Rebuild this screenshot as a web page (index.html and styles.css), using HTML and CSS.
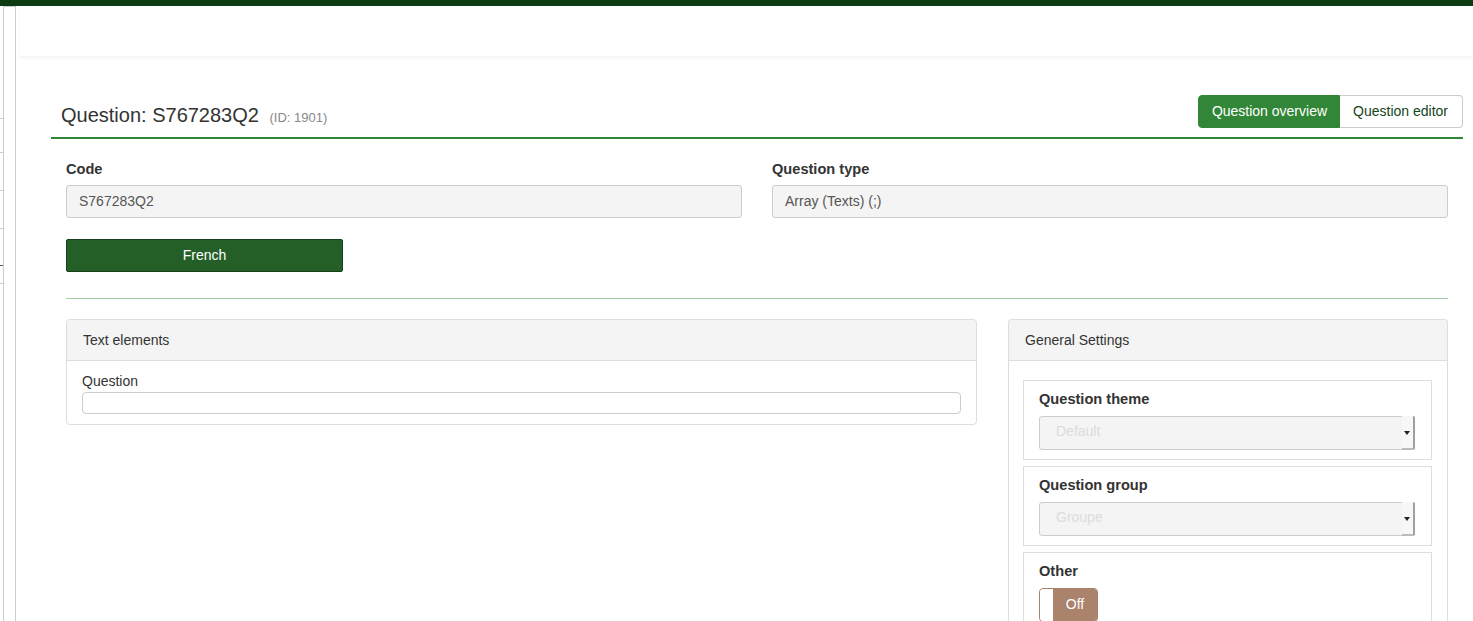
FILE: index.html
```html
<!DOCTYPE html>
<html lang="en">
<head>
<meta charset="utf-8">
<title>Question overview</title>
<link rel="stylesheet" href="styles.css">
</head>
<body>
<div class="topbar"></div>
<div class="layout">
  <aside class="sidebar">
    <div class="stubs">
      <span class="stub s1"></span>
      <span class="stub s2"></span>
      <span class="stub s3"></span>
      <span class="stub s4"></span>
      <span class="stub s5 dark"></span>
      <span class="stub s6"></span>
    </div>
    <div class="rail"></div>
  </aside>
  <main class="main">
    <div class="header"></div>
    <div class="content">
      <div class="title-row">
        <h1 class="title">Question: S767283Q2 <small class="qid">(ID: 1901)</small></h1>
        <div class="btn-group">
          <button class="tab active">Question overview</button>
          <button class="tab">Question editor</button>
        </div>
      </div>
      <div class="form">
        <div class="grid2">
          <div class="field">
            <label class="lbl">Code</label>
            <div class="input ro">S767283Q2</div>
          </div>
          <div class="field">
            <label class="lbl">Question type</label>
            <div class="input ro">Array (Texts) (;)</div>
          </div>
        </div>
        <button class="lang-btn">French</button>
        <hr class="sep">
        <div class="panels">
          <section class="panel text-panel">
            <div class="panel-head">Text elements</div>
            <div class="panel-body">
              <div class="q-label">Question</div>
              <div class="q-input"></div>
            </div>
          </section>
          <section class="panel settings-panel">
            <div class="panel-head">General Settings</div>
            <div class="panel-body settings-body">
              <div class="setting">
                <div class="lbl">Question theme</div>
                <div class="select"><span class="select-text">Default</span><span class="select-arrow"></span></div>
              </div>
              <div class="setting">
                <div class="lbl">Question group</div>
                <div class="select"><span class="select-text">Groupe</span><span class="select-arrow"></span></div>
              </div>
              <div class="setting">
                <div class="lbl">Other</div>
                <div class="toggle"><span class="knob"></span><span class="toggle-off">Off</span></div>
              </div>
            </div>
          </section>
        </div>
      </div>
    </div>
  </main>
</div>
</body>
</html>
```
FILE: styles.css
```css
html, body {
  margin: 0;
  padding: 0;
  height: 100%;
  overflow: hidden;
  background: #fff;
}
body {
  font-family: "Liberation Sans", Arial, sans-serif;
  font-size: 14px;
  color: #333;
}
.topbar {
  height: 6px;
  background: #0d3b13;
}
.layout {
  display: flex;
  min-height: 615px;
}
.sidebar {
  width: 20px;
  flex: none;
  display: flex;
}
.stubs {
  width: 3px;
  position: relative;
}
.stub {
  position: absolute;
  left: 0;
  width: 3px;
  height: 1px;
  background: #ccc;
}
.stub.dark { background: #555; }
.s1 { top: 112px; }
.s2 { top: 146px; }
.s3 { top: 184px; }
.s4 { top: 222px; }
.s5 { top: 259px; }
.s6 { top: 277px; }
.rail {
  width: 11px;
  border: 1px solid #ccc;
  border-bottom: 0;
  background: #fff;
}
.main {
  flex: 1;
  min-width: 0;
}
.header {
  height: 50px;
  background: #fff;
  box-shadow: 0 2px 3px rgba(0, 0, 0, 0.05);
}
.content {
  padding: 40px 10px 0 31px;
}
.title-row {
  display: flex;
  justify-content: space-between;
  align-items: center;
  padding-bottom: 8px;
  border-bottom: 2px solid #328637;
}
.title {
  margin: 0;
  padding-left: 10px;
  font-size: 20px;
  font-weight: normal;
  color: #333;
  line-height: 24px;
  position: relative;
  top: 4px;
}
.qid {
  font-size: 13px;
  color: #888;
  margin-left: 5px;
}
.btn-group {
  display: flex;
  position: relative;
  top: -1px;
}
.tab {
  font-family: inherit;
  font-size: 14px;
  height: 33px;
  line-height: 30px;
  padding: 0 13px 2px;
  border: 1px solid #ccc;
  background: #fff;
  color: #14451a;
  margin: 0;
  cursor: pointer;
}
.tab:first-child {
  border-radius: 4px 0 0 4px;
  padding: 0 12px 2px 13px;
}
.tab:last-child {
  border-radius: 0 4px 4px 0;
  border-left: 0;
  padding: 0 14px 2px 13px;
}
.tab.active {
  background: #328637;
  border-color: #328637;
  color: #fff;
}
.form {
  padding: 20px 15px 0 15px;
}
.grid2 {
  display: grid;
  grid-template-columns: 1fr 1fr;
  gap: 30px;
}
.lbl {
  display: block;
  font-weight: bold;
  font-size: 14.6px;
  line-height: 20px;
  color: #333;
}
.field .lbl {
  margin-bottom: 6px;
}
.input {
  height: 33px;
  box-sizing: border-box;
  padding: 0 12px;
  line-height: 31px;
  border: 1px solid #ccc;
  border-radius: 3px;
  color: #555;
}
.input.ro {
  background: #f4f4f4;
}
.lang-btn {
  display: block;
  margin-top: 21px;
  width: 277px;
  height: 33px;
  line-height: 29px;
  background: #245f28;
  border: 1px solid #173f1a;
  border-radius: 2px;
  color: #fff;
  font-family: inherit;
  font-size: 14px;
}
.sep {
  margin: 26px 0 20px;
  border: 0;
  height: 1px;
  background: #a3cda4;
}
.panels {
  display: flex;
  gap: 31px;
  align-items: flex-start;
}
.panel {
  border: 1px solid #ddd;
  border-radius: 4px;
  background: #fff;
}
.text-panel {
  flex: 0 0 911px;
  box-sizing: border-box;
}
.settings-panel {
  flex: 1;
  border-bottom: 0;
  border-radius: 4px 4px 0 0;
  min-height: 320px;
}
.panel-head {
  height: 40px;
  line-height: 40px;
  padding-left: 16px;
  background: #f4f4f4;
  border-bottom: 1px solid #ddd;
  border-radius: 4px 4px 0 0;
  color: #333;
}
.panel-body {
  padding: 10px 15px 10px;
}
.q-label {
  line-height: 20px;
}
.q-input {
  margin-top: 1px;
  height: 22px;
  box-sizing: border-box;
  border: 1px solid #ccc;
  border-radius: 4px;
}
.settings-body {
  padding: 19px 15px 0 14px;
  display: flex;
  flex-direction: column;
  gap: 6px;
}
.setting {
  border: 1px solid #ddd;
  padding: 8px 16px 9px 15px;
}
.setting .lbl {
  margin-bottom: 7px;
}
.select {
  display: flex;
  height: 34px;
  box-sizing: border-box;
  border: 1px solid #ccc;
  border-radius: 3px;
  background: #f4f4f4;
  align-items: stretch;
}
.select-text {
  flex: 1;
  padding-left: 16px;
  line-height: 28px;
  color: #dcdcdc;
}
.select-arrow {
  width: 11px;
  position: relative;
  border-right: 2px solid #a0a0a0;
  border-bottom: 2px solid #bbb;
  border-radius: 0 2px 2px 0;
  margin: -1px -1px -1px 0;
  background: #f7f7f7;
}
.select-arrow::after {
  content: "";
  position: absolute;
  left: 2px;
  top: 15px;
  border-left: 3px solid transparent;
  border-right: 3px solid transparent;
  border-top: 4px solid #222;
}
.toggle {
  display: flex;
  width: 59px;
  height: 34px;
  box-sizing: border-box;
  border: 1px solid #a9806a;
  border-radius: 4px;
  overflow: hidden;
}
.knob {
  width: 13px;
  background: #fff;
  border-radius: 3px 0 0 3px;
}
.toggle-off {
  flex: 1;
  background: #ab826b;
  color: #fff;
  text-align: center;
  line-height: 30px;
  font-size: 14px;
}
```
